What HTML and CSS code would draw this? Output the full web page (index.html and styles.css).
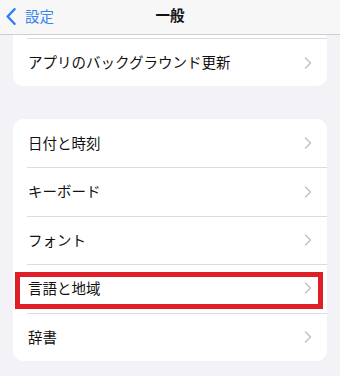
FILE: index.html
```html
<!DOCTYPE html>
<html lang="ja">
<head>
<meta charset="utf-8">
<link rel="stylesheet" href="styles.css">
</head>
<body>
<header class="nav">
  <div class="back">
    <svg class="back-icon" width="10" height="17" viewBox="0 0 10 17"><path d="M8.5 1.2 L1.6 8.5 L8.5 15.8" fill="none" stroke="#2f7cf6" stroke-width="2.4" stroke-linecap="round" stroke-linejoin="round"/></svg>
    <span class="back-label">設定</span>
  </div>
  <div class="title">一般</div>
</header>
<main class="content">
  <section class="card card-top">
    <div class="row"><span class="label">アプリのバックグラウンド更新</span><svg class="chev" width="8" height="12" viewBox="0 0 8 12"><path d="M1.5 1 L6.5 6 L1.5 11" fill="none" stroke="#c4c4c7" stroke-width="1.6" stroke-linecap="round" stroke-linejoin="round"/></svg></div>
  </section>
  <section class="card">
    <div class="row"><span class="label">日付と時刻</span><svg class="chev" width="8" height="12" viewBox="0 0 8 12"><path d="M1.5 1 L6.5 6 L1.5 11" fill="none" stroke="#c4c4c7" stroke-width="1.6" stroke-linecap="round" stroke-linejoin="round"/></svg></div>
    <div class="row"><span class="label">キーボード</span><svg class="chev" width="8" height="12" viewBox="0 0 8 12"><path d="M1.5 1 L6.5 6 L1.5 11" fill="none" stroke="#c4c4c7" stroke-width="1.6" stroke-linecap="round" stroke-linejoin="round"/></svg></div>
    <div class="row"><span class="label">フォント</span><svg class="chev" width="8" height="12" viewBox="0 0 8 12"><path d="M1.5 1 L6.5 6 L1.5 11" fill="none" stroke="#c4c4c7" stroke-width="1.6" stroke-linecap="round" stroke-linejoin="round"/></svg></div>
    <div class="row highlighted"><span class="label">言語と地域</span><svg class="chev" width="8" height="12" viewBox="0 0 8 12"><path d="M1.5 1 L6.5 6 L1.5 11" fill="none" stroke="#c4c4c7" stroke-width="1.6" stroke-linecap="round" stroke-linejoin="round"/></svg><div class="mark"></div></div>
    <div class="row"><span class="label">辞書</span><svg class="chev" width="8" height="12" viewBox="0 0 8 12"><path d="M1.5 1 L6.5 6 L1.5 11" fill="none" stroke="#c4c4c7" stroke-width="1.6" stroke-linecap="round" stroke-linejoin="round"/></svg></div>
  </section>
</main>
</body>
</html>
```
FILE: styles.css
```css
html, body {
  margin: 0;
  padding: 0;
}
body {
  width: 340px;
  height: 376px;
  overflow: hidden;
  background: #f2f2f7;
  font-family: "Noto Sans CJK JP", "Noto Sans", sans-serif;
  color: #111;
}
.nav {
  position: relative;
  height: 34px;
  box-sizing: content-box;
  background: #f7f7f7;
  border-bottom: 1px solid #cfcfd2;
  display: flex;
  align-items: center;
  justify-content: center;
}
.back {
  position: absolute;
  left: 6px;
  top: 0;
  height: 32px;
  display: flex;
  align-items: center;
  gap: 9px;
}
.back-icon {
  display: block;
}
.back-label {
  color: #3a82f0;
  font-size: 14.5px;
  line-height: 1;
}
.title {
  font-size: 14.5px;
  font-weight: 700;
  line-height: 1;
  margin-bottom: 3px;
}
.content {
  display: flex;
  flex-direction: column;
  gap: 33px;
}
.card {
  background: #fff;
  border-radius: 10px;
  margin: 0 13px;
}
.card-top {
  border-radius: 0 0 10px 10px;
  padding-top: 3px;
}
.card-top .row {
  border-top: 1px solid #dcdce0;
  height: 48px;
}
.row {
  position: relative;
  height: 48.4px;
  box-sizing: border-box;
  display: flex;
  align-items: center;
  justify-content: space-between;
  padding: 0 15px 0 1px;
  margin-left: 14px;
}
.card:not(.card-top) .row + .row::before {
  content: "";
  position: absolute;
  left: 0;
  right: 0;
  top: 0;
  height: 1px;
  background: #dcdce0;
}
.label {
  font-size: 14.5px;
  line-height: 1;
}
.chev {
  display: block;
}
.mark {
  position: absolute;
  left: -12px;
  right: 4px;
  top: 8px;
  bottom: 4px;
  border: 5px solid #de1f28;
}
```
